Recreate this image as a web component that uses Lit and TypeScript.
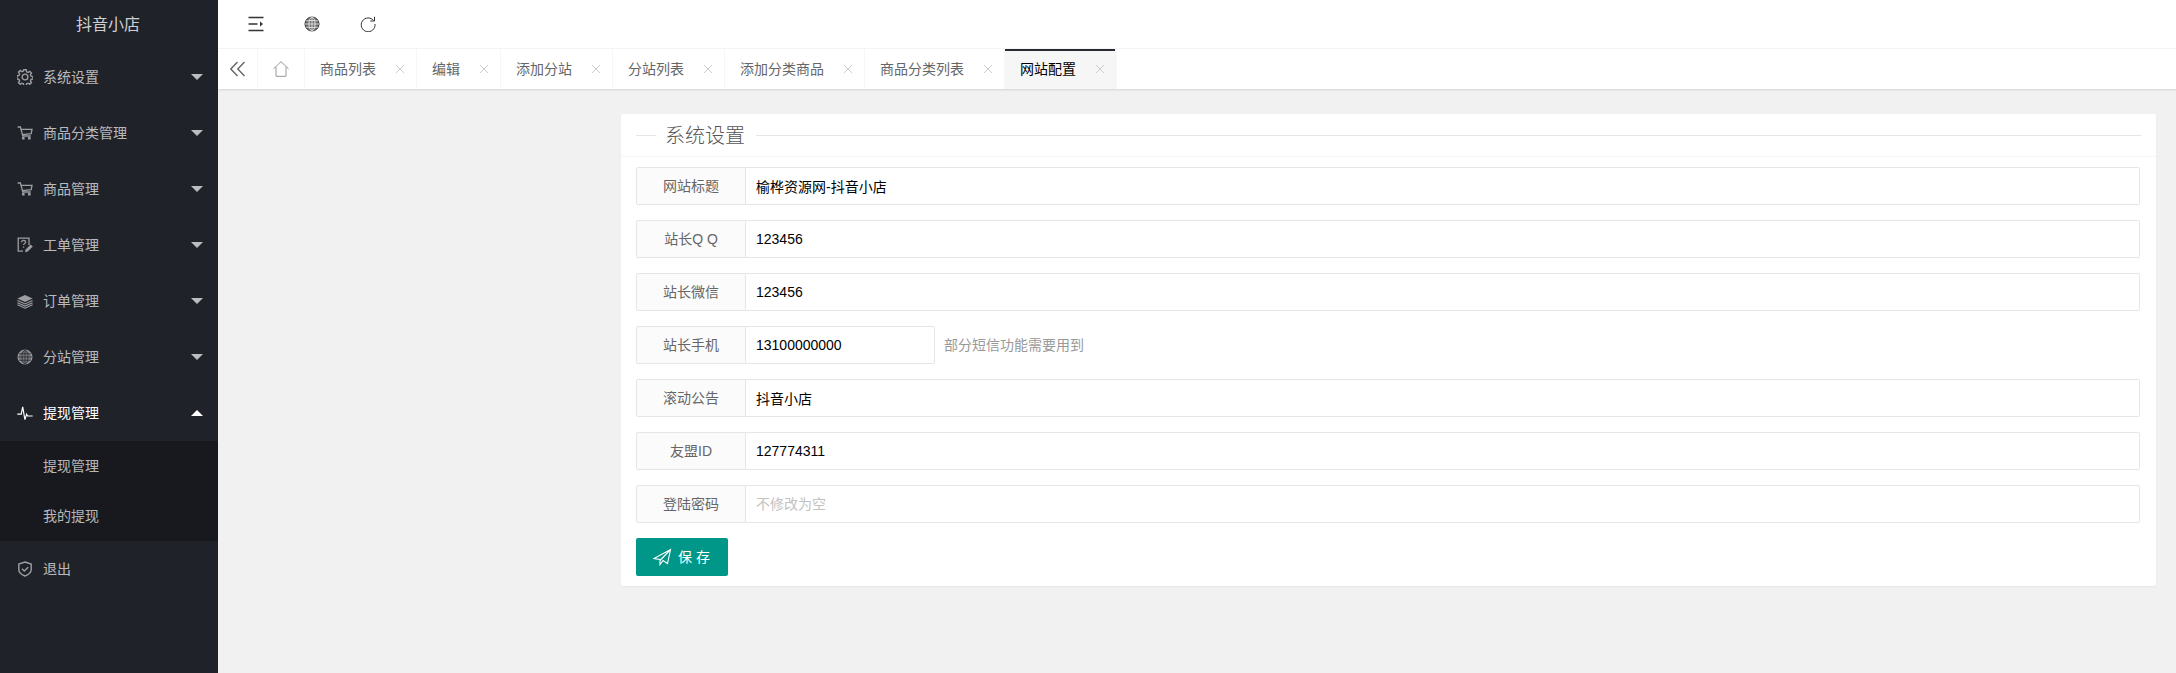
import { LitElement, html, css, svg } from "lit";
import { customElement } from "lit/decorators.js";

const globeShape = svg`<circle cx="8" cy="8" r="7" fill="currentColor" opacity=".7"/><circle cx="8" cy="8" r="7" fill="none" stroke="currentColor" stroke-width="1"/><ellipse cx="8" cy="8" rx="3" ry="7" fill="none" stroke="var(--grid)" stroke-width=".7"/><path d="M8 1v14M1 8h14M2.200 4.700h11.600M2.200 11.300h11.600" fill="none" stroke="var(--grid)" stroke-width=".7"/>`;

const icons: Record<string, unknown> = {
  gear: svg`<path d="M6.800 .8h2.400l.4 2 1.500.6 1.700-1.100 1.700 1.700-1.100 1.700.6 1.500 2 .4v2.400l-2 .4-.6 1.500 1.100 1.700-1.700 1.700-1.700-1.100-1.500.6-.4 2H6.800l-.4-2-1.500-.6-1.700 1.100-1.700-1.700 1.100-1.700-.6-1.500-2-.4V6.800l2-.4.6-1.500-1.100-1.700 1.700-1.700 1.700 1.100 1.500-.6z" fill="none" stroke="currentColor" stroke-width="1.400"/><circle cx="8" cy="8" r="2.900" fill="none" stroke="currentColor" stroke-width="1.400"/>`,
  cart: svg`<path d="M.6 2h2.800l2.400 9h8M4 4.300h11l-.8 4.300-8.900 1" fill="none" stroke="currentColor" stroke-width="1.300"/><path d="M5 12h2.600v2.600H5zM11 12h2.600v2.600H11z" fill="currentColor"/>`,
  help: svg`<path d="M12 8V1.200H1.200v13H6" fill="none" stroke="currentColor" stroke-width="1.300"/><path d="M4.600 5.200c0-1.200 1-1.900 2-1.900s2 .7 2 1.800c0 1.500-2 1.400-2 3M6.600 9.400v1.300" fill="none" stroke="currentColor" stroke-width="1.200"/><path d="M8 15.200l.6-2.800 5-5 2.200 2.200-5 5z" fill="currentColor"/>`,
  layers: svg`<path d="M8 2l7.600 3.500L8 9 .4 5.500z" fill="currentColor"/><path d="M.4 7.600L8 11l7.600-3.400M.4 9.700L8 13.100l7.600-3.400M.4 11.800L8 15.200l7.600-3.400" fill="none" stroke="currentColor" stroke-width="1.100"/>`,
  globe: globeShape,
  pulse: svg`<path d="M.3 9.200h3.900l1.500-7.400 2.200 12.800 1.700-5.400 1 1.800h5.100" fill="none" stroke="currentColor" stroke-width="1.200"/>`,
  shield: svg`<path d="M8 1l6.200 2v5.500c0 3.100-2.900 5.200-6.200 6.500-3.300-1.300-6.200-3.400-6.200-6.500V3z" fill="none" stroke="currentColor" stroke-width="1.400"/><path d="M5 7.800l2.300 2.300 3.900-3.900" fill="none" stroke="currentColor" stroke-width="1.400"/>`,
};

function icon(name: string) {
  return html`<svg class="ico" viewBox="0 0 16 16" aria-hidden="true">${icons[name]}</svg>`;
}

const menu = [
  { icon: "gear", label: "系统设置" },
  { icon: "cart", label: "商品分类管理" },
  { icon: "cart", label: "商品管理" },
  { icon: "help", label: "工单管理" },
  { icon: "layers", label: "订单管理" },
  { icon: "globe", label: "分站管理" },
  { icon: "pulse", label: "提现管理", open: true, children: ["提现管理", "我的提现"] },
  { icon: "shield", label: "退出", plain: true },
];

const tabs = ["商品列表", "编辑", "添加分站", "分站列表", "添加分类商品", "商品分类列表", "网站配置"];

const fields = [
  { label: "网站标题", value: "榆桦资源网-抖音小店" },
  { label: "站长Q Q", value: "123456" },
  { label: "站长微信", value: "123456" },
  { label: "站长手机", value: "13100000000", short: true, tip: "部分短信功能需要用到" },
  { label: "滚动公告", value: "抖音小店" },
  { label: "友盟ID", value: "127774311" },
  { label: "登陆密码", value: "", placeholder: "不修改为空" },
];

@customElement("app-root")
export class AppRoot extends LitElement {
  static styles = css`
    :host {
      display: flex;
      height: 100vh;
      min-height: 673px;
      overflow: hidden;
      background: #f1f1f1;
      font-family: "Liberation Sans", "Noto Sans CJK SC", sans-serif;
      font-size: 14px;
      color: #666;
    }
    * { box-sizing: border-box; }
    ul { list-style: none; margin: 0; padding: 0; }

    .side { width: 218px; flex: none; background: #20222a; color: rgba(255,255,255,.7); }
    .logo { height: 49px; display: flex; align-items: center; justify-content: center; font-size: 16px; color: rgba(255,255,255,.8); padding: 0 2px 4px 0; }
    .item { height: 56px; display: flex; align-items: center; padding-left: 17px; position: relative; }
    .item.open { color: #fff; }
    .ico { width: 16px; height: 16px; flex: none; --grid: #20222a; }
    .item .ico { margin-right: 10px; opacity: .8; }
    .item.open .ico { opacity: 1; }
    .lift { display: block; padding-bottom: 2px; }
    .caret { position: absolute; left: 191px; top: 25px; width: 0; height: 0; border: 6px solid transparent; border-top-color: rgba(255,255,255,.7); border-bottom-width: 0; }
    .open .caret { border-top-width: 0; border-bottom: 6px solid #fff; border-top-color: transparent; }
    .sub { background: #18191e; }
    .sub li { height: 50px; line-height: 50px; padding-left: 43px; }

    .main { flex: 1; min-width: 0; display: flex; flex-direction: column; }
    .top { height: 49px; flex: none; background: #fff; border-bottom: 1px solid #f6f6f6; display: flex; align-items: center; padding-left: 30px; gap: 40px; color: #333; }
    .top svg { width: 16px; height: 16px; display: block; --grid: #fff; }
    .top button { all: unset; display: block; }
    .tabs { height: 40px; flex: none; background: #fff; display: flex; box-shadow: 0 1px 2px rgba(0,0,0,.12); }
    .tool { display: flex; align-items: center; justify-content: center; border-right: 1px solid #f6f6f6; }
    .tool.back { width: 40px; color: #666; }
    .tool.home { width: 47px; color: #999; }
    .tool svg { width: 16px; height: 16px; }
    .tab { display: flex; align-items: center; padding: 0 8px 0 15px; border-right: 1px solid #f6f6f6; position: relative; white-space: nowrap; }
    .tab .x { width: 16px; height: 16px; margin-left: 16px; color: #ccc; }
    .tab.on { background: #f6f6f6; color: #000; border-right-color: transparent; }
    .tab.on::before { content: ""; position: absolute; left: 0; right: 1px; top: 0; height: 2px; background: #292b34; }

    .content { flex: 1; padding: 25px 20px 0 403px; }
    .card { background: #fff; border-radius: 2px; box-shadow: 0 1px 2px rgba(0,0,0,.05); }
    .head { height: 43px; display: flex; align-items: center; padding: 0 15px; border-bottom: 1px solid #f6f6f6; }
    .head i { height: 1px; background: #e6e6e6; margin-top: 1px; }
    .head i:first-child { width: 20px; }
    .head i:last-child { flex: 1; }
    .head h2 { margin: 0; padding: 2px 11px 0 9px; font-size: 20px; font-weight: 300; color: #555; line-height: 28px; }
    .body { padding: 10px 16px 10px 15px; display: flex; flex-direction: column; gap: 15px; }
    .row { display: flex; align-items: center; height: 38px; }
    .lab { width: 110px; height: 38px; flex: none; display: flex; align-items: center; justify-content: center; background: #fbfbfb; border: 1px solid #e6e6e6; border-radius: 2px 0 0 2px; }
    input { flex: 1; min-width: 0; height: 38px; border: 1px solid #e6e6e6; border-left: 0; border-radius: 0 2px 2px 0; padding: 0 10px; font: inherit; color: #000; background: #fff; outline: none; }
    input::placeholder { color: #c2c2c2; opacity: 1; }
    .short input { flex: none; width: 189px; }
    .tip { margin-left: 9px; color: #999; }
    .save { all: unset; box-sizing: border-box; width: 92px; height: 38px; background: #009688; color: #fff; border-radius: 2px; display: flex; align-items: center; padding-left: 17px; gap: 6px; white-space: pre; }
    .save svg { width: 19px; height: 19px; }
  `;

  render() {
    return html`
      <nav class="side">
        <div class="logo">抖音小店</div>
        <ul>
          ${menu.map(
            (m) => html`<li>
              <div class="item ${m.open ? "open" : ""}">
                ${icon(m.icon)}<span class="lift">${m.label}</span>
                ${m.plain ? "" : html`<span class="caret"></span>`}
              </div>
              ${m.children ? html`<ul class="sub">${m.children.map((c) => html`<li>${c}</li>`)}</ul>` : ""}
            </li>`
          )}
        </ul>
      </nav>
      <div class="main">
        <header class="top">
          <button aria-label="菜单"><svg viewBox="0 0 16 16"><path d="M.5 1.500h15M.5 14.500h15M.5 8h9" fill="none" stroke="currentColor" stroke-width="1.500"/><path d="M12 5.500L15 8l-3 2.500z" fill="currentColor"/></svg></button>
          <button aria-label="站点"><svg viewBox="0 0 16 16">${globeShape}</svg></button>
          <button aria-label="刷新"><svg viewBox="0 0 16 16"><path d="M13.600 4.600A6.900 6.900 0 1 0 15 8" fill="none" stroke="currentColor" stroke-width="1"/><path d="M14.500 .8v4.200h-4.200" fill="none" stroke="currentColor" stroke-width="1"/></svg></button>
        </header>
        <div class="tabs">
          <div class="tool back"><svg viewBox="0 0 16 16"><path d="M7.500 1L.8 8l6.700 7M14.500 1L7.800 8l6.700 7" fill="none" stroke="currentColor" stroke-width="1.400"/></svg></div>
          <div class="tool home"><svg viewBox="0 0 16 16"><path d="M.5 7.800L8 .7l7.500 7.100M3 6v9.300h10V6" fill="none" stroke="currentColor" stroke-width="1"/></svg></div>
          ${tabs.map(
            (t, i) => html`<div class="tab ${i === tabs.length - 1 ? "on" : ""}">
              <span class="lift">${t}</span>
              <svg class="ico x" viewBox="0 0 16 16"><path d="M4 4l8 8M12 4l-8 8" fill="none" stroke="currentColor" stroke-width="1"/></svg>
            </div>`
          )}
        </div>
        <main class="content">
          <section class="card">
            <div class="head"><i></i><h2>系统设置</h2><i></i></div>
            <form class="body">
              ${fields.map(
                (f) => html`<div class="row ${f.short ? "short" : ""}">
                  <label class="lab"><span class="lift">${f.label}</span></label>
                  <input .value=${f.value} placeholder=${f.placeholder ?? ""} />
                  ${f.tip ? html`<span class="tip lift">${f.tip}</span>` : ""}
                </div>`
              )}
              <button class="save" type="button">
                <svg viewBox="0 0 19 19"><path d="M1 10.500L17.500 1.500l-3 14-4.500-3-3 4v-5zM7 12.500L17.500 1.500" fill="none" stroke="currentColor" stroke-width="1.100"/></svg><span class="lift">保 存</span>
              </button>
            </form>
          </section>
        </main>
      </div>
    `;
  }
}
